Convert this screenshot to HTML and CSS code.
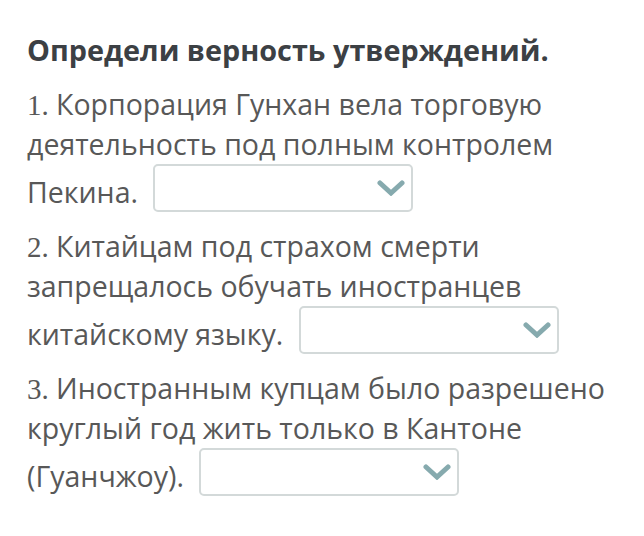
FILE: index.html
```html
<!DOCTYPE html>
<html lang="ru">
<head>
<meta charset="utf-8">
<link rel="stylesheet" href="styles.css">
</head>
<body>
<div class="page">
  <h1 class="title">Определи верность утверждений.</h1>
  <p class="item"><span class="num">1. </span>Корпорация Гунхан вела торговую деятельность под полным контролем Пекина. <span class="select"><svg class="chev" viewBox="0 0 28 16" width="28" height="16"><polyline points="3,3 14,13 25,3" /></svg></span></p>
  <p class="item"><span class="num">2. </span>Китайцам под страхом смерти запрещалось обучать иностранцев китайскому языку. <span class="select"><svg class="chev" viewBox="0 0 28 16" width="28" height="16"><polyline points="3,3 14,13 25,3" /></svg></span></p>
  <p class="item"><span class="num">3. </span>Иностранным купцам было разрешено круглый год жить только в Кантоне (Гуанчжоу). <span class="select"><svg class="chev" viewBox="0 0 28 16" width="28" height="16"><polyline points="3,3 14,13 25,3" /></svg></span></p>
</div>
</body>
</html>
```
FILE: styles.css
```css
html, body {
  margin: 0;
  padding: 0;
  background: #ffffff;
}
.page {
  padding: 32px 20px 0 27px;
  font-family: "Open Sans", "Noto Sans", sans-serif;
}
.title {
  margin: 0 0 16px 0;
  font-size: 28.8px;
  font-weight: 700;
  line-height: 36px;
  color: #3c4044;
}
.item {
  margin: 0;
  font-size: 28.5px;
  line-height: 40px;
  color: #585858;
}
.num {
  font-family: "Liberation Serif", "Times New Roman", serif;
  font-size: 29px;
  line-height: 20px;
  color: #585858;
}
.select {
  display: inline-flex;
  justify-content: flex-end;
  align-items: center;
  box-sizing: border-box;
  width: 260px;
  height: 48px;
  margin: 0 0 14px 8px;
  padding-right: 6px;
  border: 2px solid #d3d9d9;
  border-radius: 5px;
  vertical-align: middle;
  background: #fff;
}
.chev polyline {
  fill: none;
  stroke: #86aaae;
  stroke-width: 5;
  stroke-linecap: round;
  stroke-linejoin: miter;
}
```
